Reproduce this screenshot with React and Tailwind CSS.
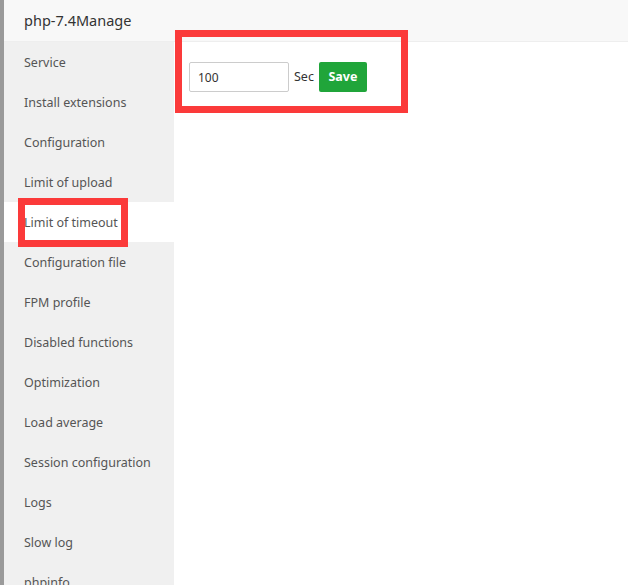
import React from 'react';

const menu = [
  'Service',
  'Install extensions',
  'Configuration',
  'Limit of upload',
  'Limit of timeout',
  'Configuration file',
  'FPM profile',
  'Disabled functions',
  'Optimization',
  'Load average',
  'Session configuration',
  'Logs',
  'Slow log',
  'phpinfo',
];

export default function App() {
  const active = 'Limit of timeout';

  return (
    <div className="relative flex h-[585px] w-[628px] overflow-hidden bg-white text-[#333] [font-family:'Noto_Sans','Open_Sans',sans-serif]">
      {/* backdrop strip */}
      <div className="w-[4px] shrink-0 bg-[#9a9a9a]" />

      {/* modal */}
      <div className="flex flex-1 flex-col">
        <div className="flex h-[42px] shrink-0 items-center border-b border-[#eee] bg-[#f8f8f8] pl-[20px] text-[14.5px] text-[#333]">
          php-7.4Manage
        </div>

        <div className="flex flex-1">
          <div className="w-[170px] shrink-0 bg-[#f0f0f0]">
            {menu.map((item) => (
              <div
                key={item}
                className={`flex h-[40px] items-center pl-[20px] pt-[2px] text-[12.5px] text-[#555] ${
                  item === active ? 'bg-white' : ''
                }`}
              >
                {item}
              </div>
            ))}
          </div>

          <div className="flex-1 bg-white px-[15px] pt-[20px]">
            <div className="flex items-center">
              <input
                defaultValue="100"
                className="h-[30px] w-[100px] rounded-[2px] border border-[#ccc] px-[8px] text-[12px] text-[#333] outline-none"
              />
              <span className="ml-[5px] text-[12.5px] text-[#333]">Sec</span>
              <button className="ml-[5px] h-[30px] w-[48px] rounded-[2px] bg-[#20a53a] text-[12.5px] font-bold text-white">
                Save
              </button>
            </div>
          </div>
        </div>
      </div>

      {/* annotation boxes */}
      <div className="absolute left-[175px] top-[30px] h-[83px] w-[233px] border-[7px] border-[#fb3a3a]" />
      <div className="absolute left-[18px] top-[198px] h-[49px] w-[110px] border-[7px] border-[#fb3a3a]" />
    </div>
  );
}
